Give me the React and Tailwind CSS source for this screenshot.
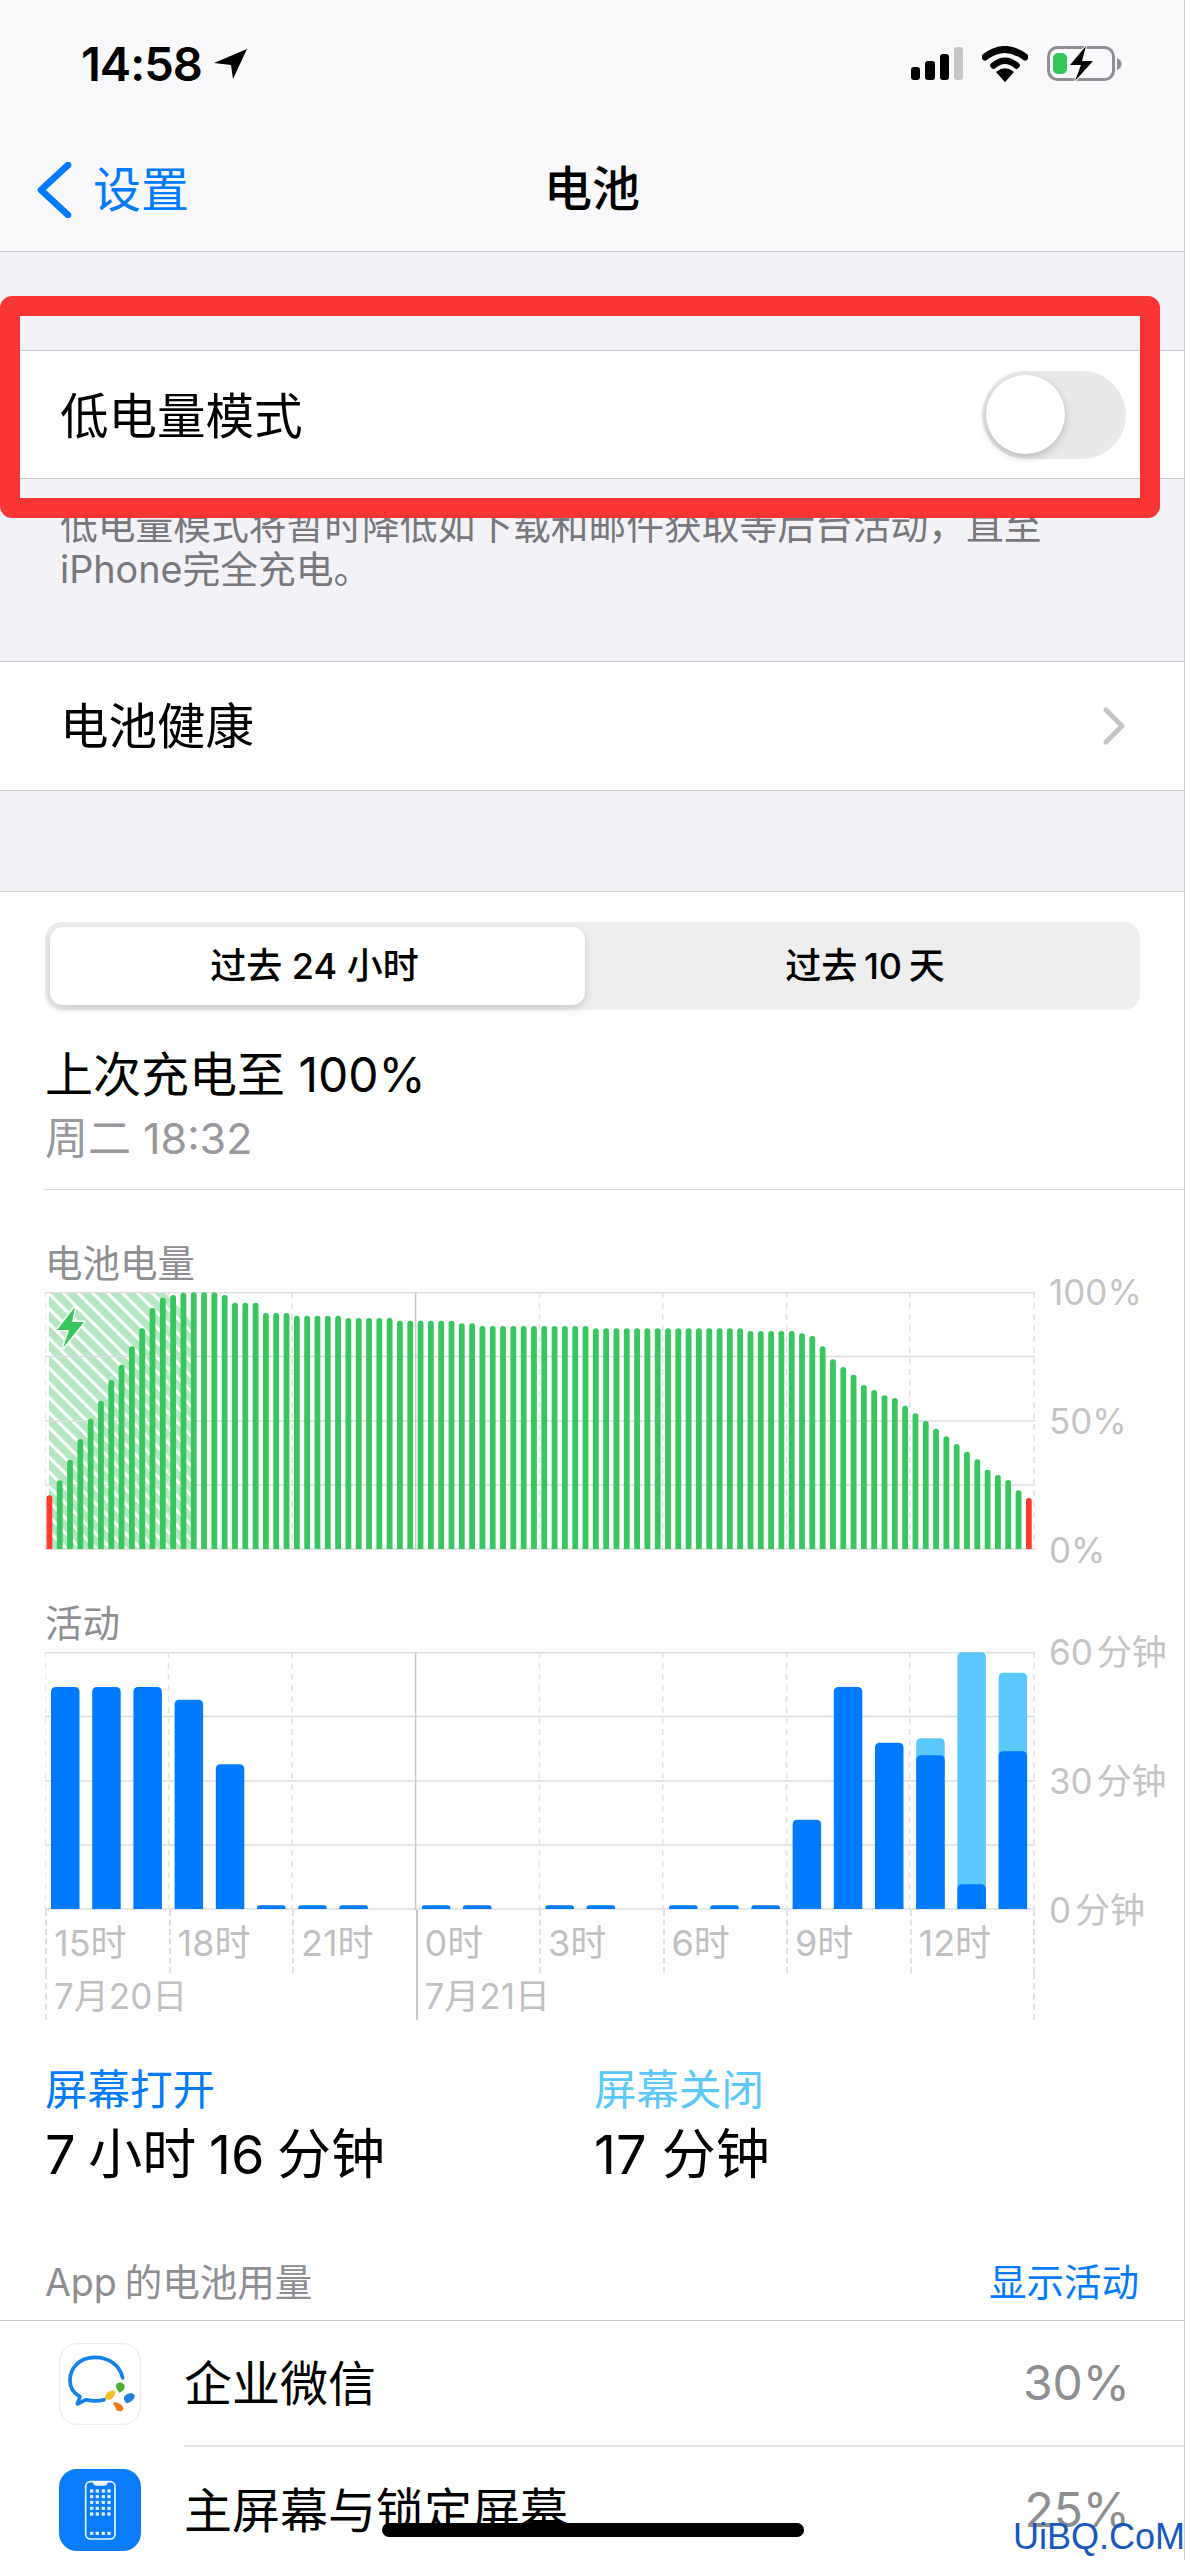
import React from "react";

// tops of the battery bars, in 3x crop pixels (187 = chart top, 958 = chart bottom)
const batteryTops = [
  797, 752, 690, 628, 567, 513, 451, 405, 350, 296, 235, 204, 196, 189, 188, 188, 188, 196, 219, 219, 219, 250, 250, 250,
  258, 258, 258, 258, 258, 265, 265, 265, 265, 265, 273, 273, 273, 273, 273, 273, 281, 281, 289, 289, 289, 289, 289, 289,
  289, 289, 289, 289, 289, 296, 296, 296, 296, 296, 296, 296, 296, 296, 296, 296, 296, 296, 296, 296, 304, 304, 304, 304,
  304, 311, 319, 350, 389, 412, 435, 466, 481, 497, 505, 528, 551, 574, 597, 620, 643, 666, 689, 720, 736, 751, 782, 805,
];

// [screen on top, screen off top], same idea (215 = top, 988 = bottom)
const activity = [
  [320], [320], [320], [358], [552], [975], [975], [975], [null], [975], [975], [null],
  [975], [975], [null], [975], [975], [975], [718], [320], [487], [525, 474], [912, 216], [513, 277],
];

const verticals = [0, 123.5, 247, 494.5, 617.7, 741.6, 864.7, 989];
const hours = ["15时", "18时", "21时", "0时", "3时", "6时", "9时", "12时"];

function barPath(x, w, top, bottom, r) {
  return `M${x} ${bottom}V${top + r}Q${x} ${top} ${x + r} ${top}H${x + w - r}Q${x + w} ${top} ${x + w} ${top + r}V${bottom}Z`;
}

function ChartGrid() {
  return (
    <>
      {[0.5, 64.5, 129, 193, 257].map((y) => (
        <line key={y} x1="0" x2="990" y1={y} y2={y} stroke="#dcdcde" strokeWidth="1.5" />
      ))}
      {verticals.map((x) => (
        <line key={x} x1={x} x2={x} y1="0" y2="258" stroke="#e2e2e4" strokeWidth="1.5" strokeDasharray="6 5" />
      ))}
      <line x1="370.6" x2="370.6" y1="0" y2="258" stroke="#c9c9cc" strokeWidth="1.5" />
    </>
  );
}

function BatteryChart() {
  return (
    <svg width="990" height="258" viewBox="0 0 990 258" className="block shrink-0">
      <defs>
        <pattern id="hatch" width="10.5" height="10.5" patternUnits="userSpaceOnUse" patternTransform="rotate(-45)">
          <rect width="10.5" height="10.5" fill="#b4e6c2" />
          <rect width="3.2" height="10.5" fill="#ffffff" />
        </pattern>
      </defs>
      <polygon points="4,0 123,0 146,30 146,257 4,257" fill="url(#hatch)" />
      <ChartGrid />
      {batteryTops.map((t, i) => (
        <path
          key={i}
          d={barPath(1.5 + i * 10.31, 5.8, (t - 187) / 3, 257, 2.8)}
          fill={i === 0 || i === 95 ? "#ff3b30" : "#38c75e"}
        />
      ))}
      <polygon points="30,15 12,38 24,38 18,56 39,30 27,30" fill="#38c75e" stroke="#ffffff" strokeWidth="3" strokeLinejoin="round" paintOrder="stroke" />
    </svg>
  );
}

function ActivityChart() {
  return (
    <svg width="990" height="258" viewBox="0 0 990 258" className="block shrink-0">
      <ChartGrid />
      {activity.map(([dark, light], i) => {
        const x = 6 + i * 41.2;
        return (
          <g key={i}>
            {light && <path d={barPath(x, 28.5, (light - 215) / 3, 257, 5)} fill="#5ac8fa" />}
            {dark && <path d={barPath(x, 28.5, (dark - 215) / 3, 257, dark > 950 ? 2.5 : 5)} fill="#007aff" />}
          </g>
        );
      })}
    </svg>
  );
}

function AxisLabels({ labels }) {
  return (
    <div className="ml-[14px] -my-[22px] flex h-[302px] flex-col justify-between text-[35px] leading-[44px] text-[#c4c4c6] [word-spacing:-6px]">
      {labels.map((l) => (
        <div key={l}>{l}</div>
      ))}
    </div>
  );
}

function WeComIcon() {
  return (
    <svg width="82" height="82" viewBox="27 27 246 246" className="shrink-0">
      <rect x="29" y="29" width="242" height="242" rx="52" fill="#ffffff" stroke="#e8e8ea" strokeWidth="3" />
      <path
        d="M218 132C210 92 175 70 135 70C90 70 60 100 60 140C60 160 72 178 90 188L82 210L108 197C125 201 145 202 162 197"
        fill="none"
        stroke="#1482e8"
        strokeWidth="11"
        strokeLinejoin="round"
        strokeLinecap="round"
      />
      <path d="M198 155C198 142 222 142 224 156C225 168 214 174 208 176C206 170 198 166 198 155Z" fill="#4fae32" />
      <path d="M165 186C170 172 190 166 196 172C198 180 188 198 175 198C170 197 163 192 165 186Z" fill="#f5c12a" />
      <path d="M222 190C226 180 246 172 254 184C256 196 240 208 228 208C226 202 220 198 222 190Z" fill="#1f80e0" />
      <path d="M190 205C200 202 222 212 220 226C214 236 200 232 198 226C198 218 188 212 190 205Z" fill="#ee7a1c" />
    </svg>
  );
}

function HomeScreenIcon() {
  const cols = [125, 142, 160, 177];
  const rows = [88, 105, 122, 140, 157];
  return (
    <svg width="82" height="82" viewBox="27 22 246 246" className="shrink-0">
      <rect x="27" y="22" width="246" height="246" rx="54" fill="#0a7cfa" />
      <rect x="107" y="60" width="88" height="172" rx="14" fill="none" stroke="#ffffff" strokeWidth="5" opacity="0.9" />
      <path d="M128 60H174C172 70 168 72 162 72H140C134 72 130 70 128 60Z" fill="#ffffff" opacity="0.9" />
      {rows.map((y) => cols.map((x) => <rect key={`${x}-${y}`} x={x - 5} y={y - 5} width="10" height="10" rx="2" fill="#ffffff" opacity="0.85" />))}
      {cols.map((x) => (
        <rect key={x} x={x - 5} y="210" width="10" height="10" rx="2" fill="#ffffff" opacity="0.9" />
      ))}
    </svg>
  );
}

function StatusIcons() {
  return (
    <div className="flex items-center">
      <svg width="52" height="34" viewBox="0 0 52 34">
        <rect x="0" y="20" width="9" height="13" rx="3" fill="#000" />
        <rect x="14" y="14" width="10" height="19" rx="3" fill="#000" />
        <rect x="29" y="7" width="9" height="26" rx="3" fill="#000" />
        <rect x="43" y="0" width="9" height="33" rx="3" fill="#c6c6c8" />
      </svg>
      <svg width="46" height="36" viewBox="0 0 46 36" className="ml-[19px]">
        <path d="M3 11Q23 -4 43 11" fill="none" stroke="#000" strokeWidth="7" strokeLinecap="round" />
        <path d="M11.500 19.500Q23 10 34.500 19.500" fill="none" stroke="#000" strokeWidth="6.500" strokeLinecap="round" />
        <path d="M15 26Q23 20 31 26L23 35Z" fill="#000" stroke="#000" strokeWidth="1.500" strokeLinejoin="round" />
      </svg>
      <svg width="75" height="38" viewBox="0 0 75 38" className="ml-[19px]">
        <rect x="1.500" y="2.500" width="65" height="32" rx="9" fill="none" stroke="#8f8f93" strokeWidth="3" />
        <path d="M70 13Q74.500 15 74.500 19Q74.500 23 70 25Z" fill="#8f8f93" />
        <rect x="6" y="8" width="14" height="21" rx="5" fill="#34c759" />
        <polygon points="39,1 23,20 34,20 28,36 46,16 35,16" fill="#000" stroke="#fbfbfd" strokeWidth="2" paintOrder="stroke" />
      </svg>
    </div>
  );
}

export default function App() {
  return (
    <div className="relative h-[2560px] w-[1185px] overflow-hidden border-r border-[#cfcfd2] bg-[#f2f2f7] font-['Inter','Noto_Sans_CJK_SC',sans-serif] text-black">
      {/* Header */}
      <div className="h-[252px] border-b border-[#c8c8cb] bg-[#f9f9fb]">
        <div className="flex h-[128px] items-center justify-between pl-[81px] pr-[62px]">
          <div className="flex items-center">
            <span className="text-[47px] font-semibold tracking-[-1px]">14:58</span>
            <svg width="36" height="34" viewBox="0 0 36 34" className="ml-[11px]">
              <path d="M34 2L1 16L18 18L20 32Z" fill="#000" />
            </svg>
          </div>
          <StatusIcons />
        </div>
        <div className="grid h-[123px] grid-cols-3 items-center">
          <div className="flex items-center pl-[36px] text-[48px] text-[#007aff]">
            <svg width="36" height="56" viewBox="0 0 36 56">
              <path d="M32 3L5 28L32 53" fill="none" stroke="#007aff" strokeWidth="6.500" strokeLinecap="round" strokeLinejoin="round" />
            </svg>
            <span className="ml-[21px]">设置</span>
          </div>
          <div className="-mt-[2px] text-center text-[48px] font-medium">电池</div>
        </div>
      </div>

      {/* Low power mode */}
      <div className="mt-[98px] flex h-[129px] items-center justify-between border-y border-[#c8c8cb] bg-white pl-[60px] pr-[58px] text-[48.500px]">
        <span className="pt-[6px]">低电量模式</span>
        <div className="flex h-[88px] w-[144px] items-center rounded-full bg-[#e9e9ea] pl-[4px]">
          <div className="h-[79px] w-[79px] rounded-full bg-white shadow-[0_3px_8px_rgba(0,0,0,0.22)]" />
        </div>
      </div>
      <div className="h-[182px] pl-[60px] pr-[40px] pt-[24px] text-[37.750px] leading-[44px] text-[#77777c]">
        低电量模式将暂时降低如下载和邮件获取等后台活动，直至
        <br />
        iPhone完全充电。
      </div>

      {/* Battery health */}
      <div className="flex h-[130px] items-center justify-between border-y border-[#c8c8cb] bg-white pl-[60px] pr-[58px] text-[48.500px]">
        <span className="pt-[3px]">电池健康</span>
        <svg width="24" height="38" viewBox="0 0 24 38">
          <path d="M4 3L20 19L4 35" fill="none" stroke="#c4c4c7" strokeWidth="5" strokeLinecap="round" strokeLinejoin="round" />
        </svg>
      </div>

      {/* Usage */}
      <div className="mt-[100px] h-[1700px] border-t border-[#d0d0d3] bg-white">
        <div className="ml-[45px] mr-[44px] mt-[30px] flex h-[88px] items-center rounded-[16px] bg-[#eeeeef] p-[5px] text-[36px] font-medium">
          <div className="flex h-[78px] w-[535px] items-center justify-center rounded-[13px] bg-white pr-[6px] shadow-[0_3px_8px_rgba(0,0,0,0.16)]">
            过去 24 小时
          </div>
          <div className="flex-1 pl-[10px] text-center [word-spacing:-3px]">过去 10 天</div>
        </div>

        <div className="mt-[35px] pl-[45px] text-[48px] leading-[60px]">上次充电至 100%</div>
        <div className="mt-[8px] pl-[45px] text-[43px] leading-[50px] text-[#98989d]">周二 18:32</div>
        <div className="ml-[44px] mt-[26px] border-t border-[#dcdcde]" />

        <div className="mt-[52px] pl-[45px] text-[37.500px] leading-[44px] text-[#8e8e93]">电池电量</div>
        <div className="mt-[6px] flex pl-[45px]">
          <BatteryChart />
          <AxisLabels labels={["100%", "50%", "0%"]} />
        </div>

        <div className="mt-[52px] pl-[45px] text-[37.500px] leading-[44px] text-[#8e8e93]">活动</div>
        <div className="mt-[6px] flex pl-[45px]">
          <ActivityChart />
          <AxisLabels labels={["60 分钟", "30 分钟", "0 分钟"]} />
        </div>

        <div className="ml-[45px] grid h-[63px] w-[990px] grid-cols-8 border-r-2 border-dashed border-[#e2e2e4] text-[36px] leading-[44px] text-[#c0c0c3]">
          {hours.map((h) => (
            <div
              key={h}
              className={`border-l-2 pl-[7px] pt-[11px] ${h === "0时" ? "border-solid border-[#c9c9cc]" : "border-dashed border-[#e2e2e4]"}`}
            >
              {h}
            </div>
          ))}
        </div>
        <div className="ml-[45px] grid h-[47px] w-[990px] grid-cols-8 border-r-2 border-dashed border-[#e2e2e4] text-[35px] leading-[47px] text-[#c0c0c3]">
          <div className="col-span-3 border-l-2 border-dashed border-[#e2e2e4] pl-[7px]">7月20日</div>
          <div className="col-span-5 border-l-2 border-solid border-[#c9c9cc] pl-[7px]">7月21日</div>
        </div>

        <div className="mt-[45px] flex pl-[45px]">
          <div className="w-[549px]">
            <div className="text-[42.500px] leading-[50px] text-[#007aff]">屏幕打开</div>
            <div className="mt-[7px] text-[54px] leading-[66px] [word-spacing:-2.500px]">7 小时 16 分钟</div>
          </div>
          <div>
            <div className="text-[42.500px] leading-[50px] text-[#5ac8fa]">屏幕关闭</div>
            <div className="mt-[7px] text-[54px] leading-[66px]">17 分钟</div>
          </div>
        </div>

        <div className="mt-[73px] flex items-center justify-between pl-[45px] pr-[45px] text-[37.500px] leading-[44px]">
          <span className="text-[#8e8e93] [word-spacing:-2.500px]">App 的电池用量</span>
          <span className="text-[#007aff]">显示活动</span>
        </div>
        <div className="mt-[15px] border-t border-[#c8c8cb]" />

        <div className="flex h-[126px] items-center pl-[59px] text-[48px]">
          <WeComIcon />
          <div className="ml-[43px] flex h-full flex-1 items-center justify-between border-b-2 border-[#e2e2e4] pr-[54px]">
            <span className="pt-[2px]">企业微信</span>
            <span className="text-[#8e8e93]">30%</span>
          </div>
        </div>
        <div className="flex h-[126px] items-center pl-[59px] text-[48px]">
          <HomeScreenIcon />
          <div className="ml-[43px] flex h-full flex-1 items-center justify-between pr-[54px]">
            <span className="pt-[2px]">主屏幕与锁定屏幕</span>
            <span className="text-[#8e8e93]">25%</span>
          </div>
        </div>
      </div>

      {/* Annotation, home bar and watermark sit on top of the screenshot */}
      <div className="absolute left-0 top-[296px] h-[222px] w-[1160px] rounded-[12px] border-[20px] border-[#f93535]" />
      <div className="absolute left-[382px] top-[2523px] h-[14px] w-[422px] rounded-full bg-black" />
      <div className="absolute left-[1013px] top-[2515px] font-['Liberation_Sans',sans-serif] text-[36px] leading-[44px] text-[#1658bd]">UiBQ.CoM</div>
    </div>
  );
}
